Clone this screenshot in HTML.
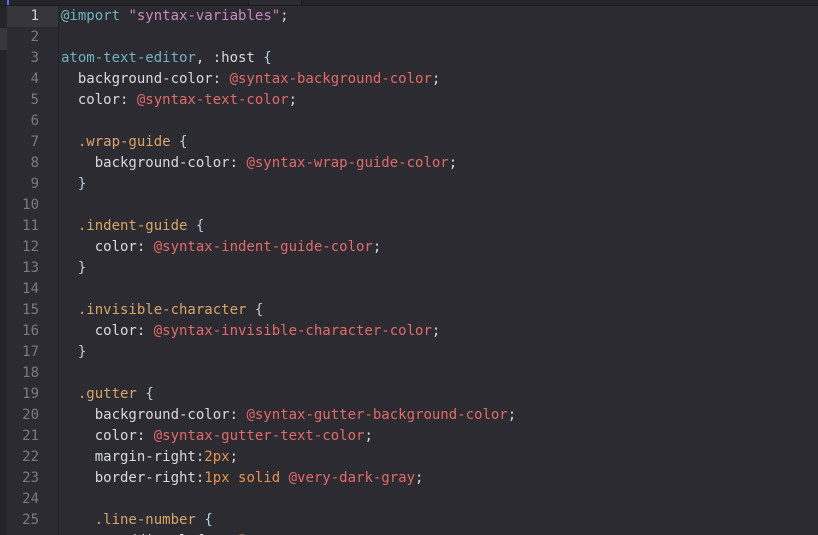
<!DOCTYPE html>
<html style="overflow:hidden;height:535px"><head><style>
body{margin:0;width:818px;height:535px;overflow:hidden;background:#2c2b31;position:relative;font-family:"DejaVu Sans Mono",monospace;}
#top{position:absolute;left:0;top:0;width:818px;height:5px;background:#242328;border-bottom:1px solid #1b1a1e;}
#tab{position:absolute;left:248px;top:0;width:52px;height:5px;background:#2c2b31;border-left:1px solid #1b1a1e;border-right:1px solid #1b1a1e;}
#blue{position:absolute;left:7px;top:0;width:2px;height:5px;background:#5b6cf0;}
#strip{position:absolute;left:0;top:6px;width:7px;height:529px;background:#252429;}
#striphl{position:absolute;left:0;top:28px;width:7px;height:22px;background:#38373d;}
#gutter{position:absolute;left:7px;top:6px;width:51px;height:529px;background:#2c2b31;border-right:1px solid #242328;}
#active{position:absolute;left:7px;top:6px;width:51px;height:21px;background:#37363c;}
.ln{position:absolute;left:7px;width:32px;text-align:right;font-size:14px;color:#7a7a80;line-height:21px;font-family:"DejaVu Sans Mono",monospace;}
.ln.a{color:#d0d0d4;}
pre{position:absolute;left:61px;top:6px;height:529px;overflow:hidden;margin:0;font-family:"DejaVu Sans Mono",monospace;font-size:14px;line-height:21px;color:#d7dae0;}
.t{color:#6fb3c0}.s{color:#c88bc0}.v{color:#e26a6a}.c{color:#d9a66a}.n{color:#e5954b}.b{color:#b8d0e0}
</style></head><body>
<div id="top"></div><div id="tab"></div><div id="blue"></div>
<div id="strip"></div><div id="striphl"></div>
<div id="gutter"></div><div id="active"></div>
<div class="ln a" style="top:6px">1</div><div class="ln" style="top:27px">2</div><div class="ln" style="top:48px">3</div><div class="ln" style="top:69px">4</div><div class="ln" style="top:90px">5</div><div class="ln" style="top:111px">6</div><div class="ln" style="top:132px">7</div><div class="ln" style="top:153px">8</div><div class="ln" style="top:174px">9</div><div class="ln" style="top:195px">10</div><div class="ln" style="top:216px">11</div><div class="ln" style="top:237px">12</div><div class="ln" style="top:258px">13</div><div class="ln" style="top:279px">14</div><div class="ln" style="top:300px">15</div><div class="ln" style="top:321px">16</div><div class="ln" style="top:342px">17</div><div class="ln" style="top:363px">18</div><div class="ln" style="top:384px">19</div><div class="ln" style="top:405px">20</div><div class="ln" style="top:426px">21</div><div class="ln" style="top:447px">22</div><div class="ln" style="top:468px">23</div><div class="ln" style="top:489px">24</div><div class="ln" style="top:510px">25</div>
<pre><span class="t">@import</span> <span class="s">"syntax-variables"</span>;

<span class="t">atom-text-editor</span>, :host <span class="b">{</span>
  background-color: <span class="v">@syntax-background-color</span>;
  color: <span class="v">@syntax-text-color</span>;

  <span class="c">.wrap-guide</span> <span class="b">{</span>
    background-color: <span class="v">@syntax-wrap-guide-color</span>;
  <span class="b">}</span>

  <span class="c">.indent-guide</span> <span class="b">{</span>
    color: <span class="v">@syntax-indent-guide-color</span>;
  <span class="b">}</span>

  <span class="c">.invisible-character</span> <span class="b">{</span>
    color: <span class="v">@syntax-invisible-character-color</span>;
  <span class="b">}</span>

  <span class="c">.gutter</span> <span class="b">{</span>
    background-color: <span class="v">@syntax-gutter-background-color</span>;
    color: <span class="v">@syntax-gutter-text-color</span>;
    margin-right:<span class="n">2px</span>;
    border-right:<span class="n">1px solid</span> <span class="v">@very-dark-gray</span>;

    <span class="c">.line-number</span> <span class="b">{</span>
      padding-left: <span class="n">.5em</span>;
</pre>
</body></html>
